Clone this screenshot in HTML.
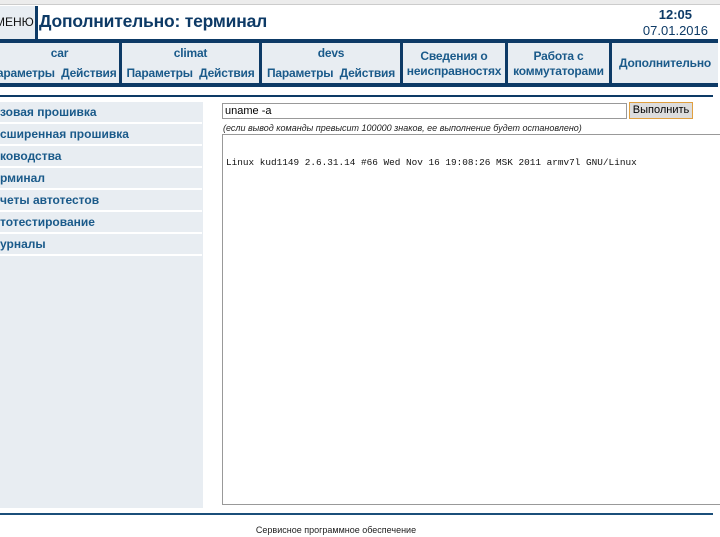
<!DOCTYPE html>
<html><head><meta charset="utf-8"><style>
*{margin:0;padding:0;box-sizing:border-box}
body{width:720px;height:537px;overflow:hidden;background:#fff;font-family:"Liberation Sans",sans-serif;position:relative}
.a{position:absolute}
.tab{position:absolute;top:43px;height:40px;background:#e8edf2;color:#1a5a8a;font-weight:bold;font-size:12px;text-align:center;letter-spacing:-0.2px}
.side{position:absolute;left:0;width:202px;height:20px;background:#e8edf2;color:#1a5a8a;font-weight:bold;font-size:12px;line-height:20px}
</style></head><body>
<div class="a" style="left:0;top:0;width:720px;height:5px;background:#ececec;border-bottom:1px solid #ccc"></div>
<div class="a" style="left:0;top:6px;width:35px;height:33px;background:#e8edf2;font-size:12px;line-height:33px;color:#111;overflow:hidden;white-space:nowrap"><span style="margin-left:-5px">МЕНЮ</span></div>
<div class="a" style="left:35px;top:6px;width:3px;height:33px;background:#0d3a66"></div>
<div class="a" style="left:39px;top:11px;font-size:17.5px;font-weight:bold;color:#0d3a66;letter-spacing:-0.2px">Дополнительно: терминал</div>
<div class="a" style="left:640px;top:7px;width:52px;text-align:right;font-size:13px;font-weight:bold;color:#0d3a66">12:05</div>
<div class="a" style="left:620px;top:23px;width:88px;text-align:right;font-size:13px;color:#0d3a66">07.01.2016</div>
<div class="a" style="left:0;top:39px;width:718px;height:48px;background:#0d3a66"></div>
<div class="tab" style="left:0;width:119px;overflow:hidden"><div style="margin-top:3px">car</div><div style="margin-top:6px;white-space:nowrap;margin-left:-14px">Параметры&nbsp;&nbsp;Действия</div></div>
<div class="tab" style="left:122px;width:137px"><div style="margin-top:3px">climat</div><div style="margin-top:6px;white-space:nowrap">Параметры&nbsp;&nbsp;Действия</div></div>
<div class="tab" style="left:262px;width:138px"><div style="margin-top:3px">devs</div><div style="margin-top:6px;white-space:nowrap">Параметры&nbsp;&nbsp;Действия</div></div>
<div class="tab" style="left:403px;width:102px;padding-top:6px;line-height:15px">Сведения о неисправностях</div>
<div class="tab" style="left:508px;width:101px;padding-top:6px;line-height:15px">Работа с коммутаторами</div>
<div class="tab" style="left:612px;width:106px;line-height:40px">Дополнительно</div>
<div class="a" style="left:0;top:95px;width:713px;height:2px;background:#0d3a66"></div>
<div class="a" style="left:0;top:102px;width:203px;height:406px;background:#e8edf2"></div>
<div class="side" style="top:102px;border-bottom:2px solid #fff;height:22px">зовая прошивка</div>
<div class="side" style="top:124px;border-bottom:2px solid #fff;height:22px">сширенная прошивка</div>
<div class="side" style="top:146px;border-bottom:2px solid #fff;height:22px">ководства</div>
<div class="side" style="top:168px;border-bottom:2px solid #fff;height:22px">рминал</div>
<div class="side" style="top:190px;border-bottom:2px solid #fff;height:22px">четы автотестов</div>
<div class="side" style="top:212px;border-bottom:2px solid #fff;height:22px">тотестирование</div>
<div class="side" style="top:234px;border-bottom:2px solid #fff;height:22px">урналы</div>
<div class="a" style="left:222px;top:103px;width:405px;height:16px;border:1px solid #999;font-size:11px;padding-left:2px;line-height:14px">uname -a</div>
<div class="a" style="left:629px;top:102px;width:64px;height:17px;background:#ddd;border:1px solid #e0a040;font-size:11px;text-align:center;line-height:15px">Выполнить</div>
<div class="a" style="left:223px;top:123px;font-size:9px;font-style:italic;color:#222">(если вывод команды превысит 100000 знаков, ее выполнение будет остановлено)</div>
<div class="a" style="left:222px;top:134px;width:500px;height:371px;border:1px solid #999"></div>
<div class="a" style="left:226px;top:157px;font-family:'Liberation Mono',monospace;font-size:9.4px;color:#111">Linux kud1149 2.6.31.14 #66 Wed Nov 16 19:08:26 MSK 2011 armv7l GNU/Linux</div>
<div class="a" style="left:0;top:513px;width:713px;height:2px;background:#1b4f7a"></div>
<div class="a" style="left:0;top:525px;width:672px;text-align:center;font-size:9px;color:#222">Сервисное программное обеспечение</div>
</body></html>
